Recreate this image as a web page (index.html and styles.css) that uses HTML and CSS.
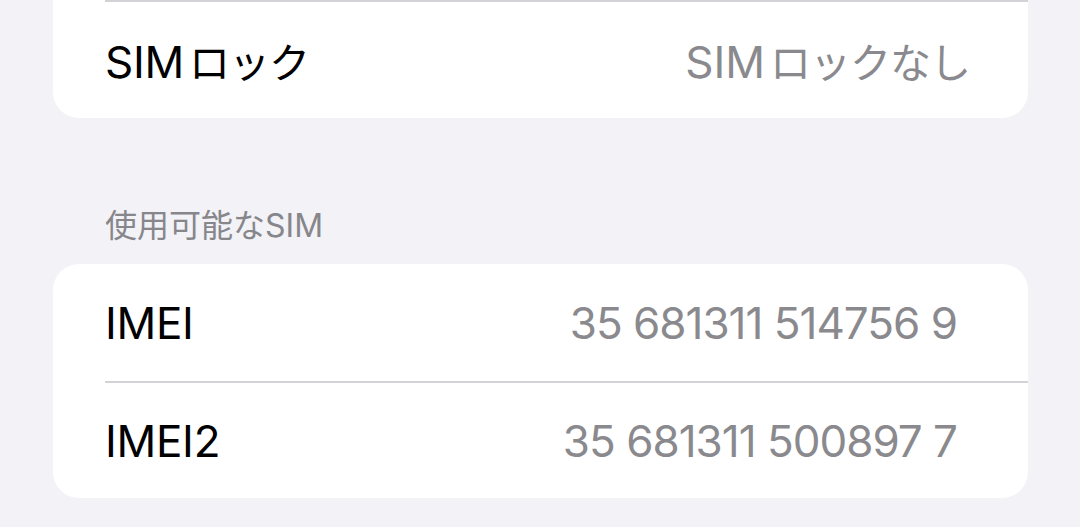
FILE: index.html
```html
<!DOCTYPE html>
<html lang="ja">
<head>
  <meta charset="UTF-8">
  <meta name="viewport" content="width=device-width, initial-scale=1.0">
  <title>情報</title>
  <link rel="stylesheet" href="styles.css">
</head>
<body>
  <div class="group group-cut">
    <div class="cell">
      <div class="cell-body sep">
        <span class="label">SIM<span class="kana">ロック</span></span>
        <span class="value">SIM<span class="kana">ロックなし</span></span>
      </div>
    </div>
  </div>

  <div class="section-title">使用可能なSIM</div>

  <div class="group">
    <div class="cell">
      <div class="cell-body">
        <span class="label">IMEI</span>
        <span class="value num">35 681311 514756 9</span>
      </div>
    </div>
    <div class="cell">
      <div class="cell-body sep">
        <span class="label">IMEI2</span>
        <span class="value num">35 681311 500897 7</span>
      </div>
    </div>
  </div>
</body>
</html>
```

FILE: styles.css
```css
* { box-sizing: border-box; margin: 0; padding: 0; }
html, body { height: 100%; }
body {
  font-family: Inter, "Noto Sans CJK JP", sans-serif;
  background: #f2f2f7;
  color: #000;
  padding: 0 52px 0 53px;
  overflow: hidden;
}
.group {
  background: #fff;
  border-radius: 26px;
  overflow: hidden;
}
/* list continues above the top of the screen */
.group-cut {
  border-top-left-radius: 0;
  border-top-right-radius: 0;
  height: 118px;
}
.cell {
  padding-left: 52px;
}
.cell-body {
  height: 117px;
  display: flex;
  align-items: center;
  justify-content: space-between;
  padding-right: 58px;
}
.cell-body.sep {
  border-top: 2px solid #d3d3d7;
}
.label {
  font-size: 44px;
  letter-spacing: -0.3px;
}
.value {
  font-size: 44px;
  color: #8a8a8e;
}
.kana {
  font-size: 41px;
  margin-left: 5px;
  letter-spacing: -1px;
}
.value.num {
  letter-spacing: -1px;
  padding-right: 13px;
}
.section-title {
  font-size: 32px;
  line-height: 40px;
  color: #86868b;
  padding: 88px 0 18px 52px;
}
```
